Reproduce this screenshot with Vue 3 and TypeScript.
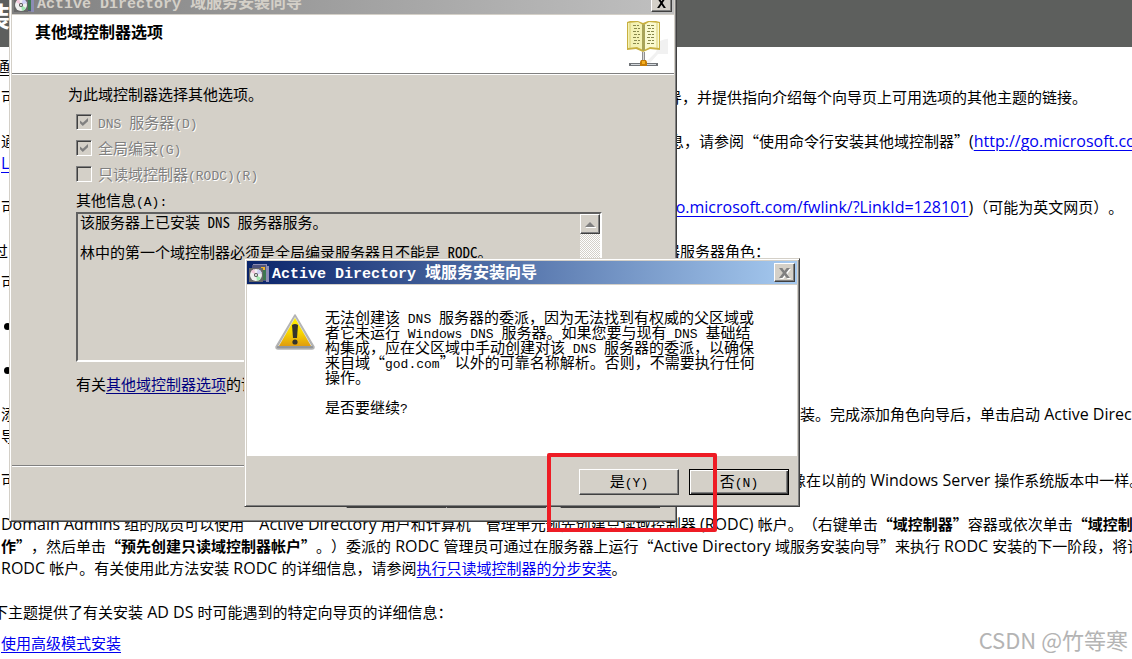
<script setup lang="ts">
interface Run {
  text: string
  latin: boolean
}
interface Segment {
  text: string
  bold?: boolean
  href?: string
}
interface Line {
  kind?: string
  lead?: Segment[]
  leadWidth?: number
  rest?: Segment[]
}

// Splits mixed text so that Latin and Chinese runs can each have their own face.
function runs(text: string): Run[] {
  const parts = text.match(/[\x00-\x7f]+|[^\x00-\x7f]+/g) ?? []
  return parts.map((part) => ({ text: part, latin: part.charCodeAt(0) < 128 }))
}

const appTitle = 'Active Directory 域服务安装向导'

const lines: Line[] = [
  { kind: 'outdent-small', lead: [{ text: '通' }] },
  {
    kind: 'near',
    lead: [{ text: '可' }],
    leadWidth: 666,
    rest: [{ text: '导，并提供指向介绍每个向导页上可用选项的其他主题的链接。' }],
  },
  {
    kind: 'para',
    lead: [{ text: '通' }],
    leadWidth: 668,
    rest: [
      { text: '息，请参阅“使用命令行安装其他域控制器”(' },
      { text: 'http://go.microsoft.com/fwlink/?', href: '#commandline' },
    ],
  },
  { lead: [{ text: 'L', href: '#commandline' }] },
  {
    kind: 'para',
    lead: [{ text: '可' }],
    leadWidth: 666,
    rest: [
      { text: 'go.microsoft.com/fwlink/?LinkId=128101', href: '#fwlink' },
      { text: ')（可能为英文网页）。' },
    ],
  },
  {
    kind: 'para outdent',
    lead: [{ text: '过' }],
    leadWidth: 672,
    rest: [{ text: '器服务器角色：' }],
  },
  { kind: 'near', lead: [{ text: '可' }] },
  { kind: 'para bullet' },
  { kind: 'para bullet' },
  {
    kind: 'para',
    lead: [{ text: '添' }],
    leadWidth: 799,
    rest: [{ text: '装。完成添加角色向导后，单击启动 Active Directory' }],
  },
  { lead: [{ text: '导' }] },
  {
    kind: 'para',
    lead: [{ text: '可' }],
    leadWidth: 790,
    rest: [{ text: '像在以前的 Windows Server 操作系统版本中一样。' }],
  },
  {
    kind: 'para',
    rest: [
      { text: 'Domain Admins 组的成员可以使用“Active Directory 用户和计算机”管理单元预先创建只读域控制器 (RODC) 帐户。（右键单击' },
      { text: '“域控制器”', bold: true },
      { text: '容器或依次单击' },
      { text: '“域控制器”', bold: true },
    ],
  },
  {
    rest: [
      { text: '作”', bold: true },
      { text: '，然后单击' },
      { text: '“预先创建只读域控制器帐户”', bold: true },
      { text: '。）委派的 RODC 管理员可通过在服务器上运行“Active Directory 域服务安装向导”来执行 RODC 安装的下一阶段，将该' },
    ],
  },
  {
    rest: [
      { text: 'RODC 帐户。有关使用此方法安装 RODC 的详细信息，请参阅' },
      { text: '执行只读域控制器的分步安装', href: '#rodc-steps' },
      { text: '。' },
    ],
  },
  {
    kind: 'para outdent',
    rest: [{ text: '下主题提供了有关安装 AD DS 时可能遇到的特定向导页的详细信息：' }],
  },
  { kind: 'near', rest: [{ text: '使用高级模式安装', href: '#advanced' }] },
]

const options = [
  { id: 'dns', label: 'DNS 服务器(D)', checked: true },
  { id: 'gc', label: '全局编录(G)', checked: true },
  { id: 'rodc', label: '只读域控制器(RODC)(R)', checked: false },
]

const info = '该服务器上已安装 DNS 服务器服务。\n\n林中的第一个域控制器必须是全局编录服务器且不能是 RODC。'

const message = [
  '无法创建该 DNS 服务器的委派，因为无法找到有权威的父区域或',
  '者它未运行 Windows DNS 服务器。如果您要与现有 DNS 基础结',
  '构集成，应在父区域中手动创建对该 DNS 服务器的委派，以确保',
  '来自域“god.com”以外的可靠名称解析。否则，不需要执行任何',
  '操作。',
  '',
  '是否要继续?',
]
</script>

<template>
  <main class="desk">
    <article class="doc">
      <header class="doc-head"><h1>装</h1></header>
      <div class="doc-body">
        <p v-for="(line, i) in lines" :key="i" class="line" :class="line.kind">
          <span v-if="line.lead" class="lead" :style="{ width: line.leadWidth ? line.leadWidth + 'px' : 'auto' }">
            <component
              :is="seg.href ? 'a' : 'span'"
              v-for="(seg, j) in line.lead"
              :key="j"
              :href="seg.href"
            ><span v-for="(run, k) in runs(seg.text)" :key="k" :class="{ latin: run.latin }">{{ run.text }}</span></component>
          </span>
          <span v-if="line.rest">
            <component
              :is="seg.href ? 'a' : seg.bold ? 'strong' : 'span'"
              v-for="(seg, j) in line.rest"
              :key="j"
              :href="seg.href"
            ><span v-for="(run, k) in runs(seg.text)" :key="k" :class="{ latin: run.latin }">{{ run.text }}</span></component>
          </span>
        </p>
      </div>
    </article>

    <section class="window wizard">
      <div class="titlebar inactive">
        <svg class="app-icon" viewBox="0 0 20 20" aria-hidden="true">
          <path d="M4 1h14v2h2v16h-3V4H4z" fill="#8c8cb4" />
          <path d="M3 2h14v16h-3V5H3z" fill="#50547c" />
          <path d="M12 4h4v12h-3z" fill="#f0b428" />
          <path d="M14 7h3v10h-3z" fill="#3c7850" />
          <path d="M0 5h14v14H0z" fill="#686868" />
          <circle cx="7" cy="12" r="6" fill="#f0f0f0" />
          <path d="M7 12L2 9a6 6 0 0 1 3-3z" fill="#f4c8dc" />
          <path d="M7 12l5 3a6 6 0 0 1-4 3z" fill="#a0e8b0" />
          <path d="M7 12l2-6a6 6 0 0 1 4 4z" fill="#d0d0f4" />
          <circle cx="7" cy="12" r="2" fill="#505050" />
          <circle cx="7" cy="12" r="1" fill="#fff" />
        </svg>
        <h2 class="title"><span v-for="(run, k) in runs(appTitle)" :key="k" :class="{ latin: run.latin }">{{ run.text }}</span></h2>
        <button class="close" type="button" aria-label="关闭">
          <svg viewBox="0 0 10 9" aria-hidden="true"><path d="M1 0h2l2 3 2-3h2L6 4.500l3 4.500H7L5 6 3 9H1l3-4.500z" fill="currentColor" /></svg>
        </button>
      </div>
      <header class="page-head">
        <h3>其他域控制器选项</h3>
        <svg class="book" viewBox="0 0 44 50" aria-hidden="true">
          <path d="M34 21q8-3 8-2v15H32l-8 9h-5l11-11z" fill="#f1f1f1" />
          <path d="M1 2l3-1 8 0 5 2 5-2 8 0 4 1v28l-10-1-7 3-7-3-9 1z" fill="#c8b040" />
          <path d="M2 3l10-1 5 3v25l-6-3-9 1z" fill="#f4f2b4" />
          <path d="M33 3L23 2l-5 3v25l6-3 9 1z" fill="#fafad0" />
          <path d="M16 4l1.500 1L19 4v26l-1.500 1L16 30z" fill="#a8a458" />
          <path d="M4 3v25M31 3v25" stroke="#d8cc70" fill="none" />
          <path d="M7 5.500h6M8 8.500h6M7 11.500h6M8 14.500h6M7 17.500h6M8 20.500h6M7 23.500h6M21 5.500h7M22 8.500h6M21 11.500h7M22 14.500h6M21 17.500h7M22 20.500h6M21 23.500h7" stroke="#88884c" stroke-dasharray="3 1" fill="none" />
          <path d="M16 32h3v9h-3z" fill="#909090" />
          <path d="M17 32h1v9h-1z" fill="#d8d8d8" />
          <path d="M3 43h29v3H3z" fill="#707478" />
          <path d="M5 44h25v1H5z" fill="#d4d8dc" />
          <path d="M15 40h5l1 2v4h-7v-4z" fill="#c47c08" />
          <path d="M16 41h3v3h-3z" fill="#f4b020" />
        </svg>
      </header>
      <div class="page">
        <p class="text"><span>为此域控制器选择其他选项。</span></p>
        <div class="fields">
          <div v-for="o in options" :key="o.id" class="option">
            <input :id="o.id" type="checkbox" :checked="o.checked" disabled />
            <label :for="o.id"><span v-for="(run, k) in runs(o.label)" :key="k" :class="{ latin: run.latin }">{{ run.text }}</span></label>
          </div>
          <label class="text info-label" for="info"><span v-for="(run, k) in runs('其他信息(A):')" :key="k" :class="{ latin: run.latin }">{{ run.text }}</span></label>
          <div class="info-box">
            <textarea id="info" readonly :value="info"></textarea>
            <div class="scroll">
              <button type="button" aria-label="向上滚动" disabled>
                <svg viewBox="0 0 11 7" aria-hidden="true"><path d="M1 6h10v1H1z" fill="#fff" /><path d="M0 6l5-5 5 5z" fill="#808080" /></svg>
              </button>
            </div>
          </div>
          <p class="text more"><span>有关</span><a href="#options">其他域控制器选项</a><span>的详细信息</span></p>
        </div>
      </div>
      <footer class="wizard-foot">
        <div class="pair">
          <button class="btn" type="button" aria-label="上一步"></button>
          <button class="btn" type="button" aria-label="下一步"></button>
        </div>
        <button class="btn" type="button" aria-label="取消"></button>
      </footer>
    </section>

    <section class="window alert" role="alertdialog" aria-labelledby="alert-title">
      <div class="titlebar">
        <svg class="app-icon" viewBox="0 0 20 20" aria-hidden="true">
          <path d="M4 1h14v2h2v16h-3V4H4z" fill="#8c8cb4" />
          <path d="M3 2h14v16h-3V5H3z" fill="#50547c" />
          <path d="M12 4h4v12h-3z" fill="#f0b428" />
          <path d="M14 7h3v10h-3z" fill="#3c7850" />
          <path d="M0 5h14v14H0z" fill="#686868" />
          <circle cx="7" cy="12" r="6" fill="#f0f0f0" />
          <path d="M7 12L2 9a6 6 0 0 1 3-3z" fill="#f4c8dc" />
          <path d="M7 12l5 3a6 6 0 0 1-4 3z" fill="#a0e8b0" />
          <path d="M7 12l2-6a6 6 0 0 1 4 4z" fill="#d0d0f4" />
          <circle cx="7" cy="12" r="2" fill="#505050" />
          <circle cx="7" cy="12" r="1" fill="#fff" />
        </svg>
        <h2 id="alert-title" class="title"><span v-for="(run, k) in runs(appTitle)" :key="k" :class="{ latin: run.latin }">{{ run.text }}</span></h2>
        <button class="close" type="button" aria-label="关闭" disabled>
          <svg viewBox="0 0 10 9" aria-hidden="true"><path d="M0 0h3l2 2.500L7 0h3L6.500 4.500 10 9H7L5 6.500 3 9H0l3.500-4.500z" fill="currentColor" /></svg>
        </button>
      </div>
      <div class="alert-body">
        <svg class="warn" viewBox="0 0 42 38" aria-hidden="true">
          <defs>
            <linearGradient id="warn-fill" x1="0" y1="0" x2="0" y2="1">
              <stop offset="0" stop-color="#fff000" />
              <stop offset="0.5" stop-color="#f8d800" />
              <stop offset="1" stop-color="#e09c10" />
            </linearGradient>
            <linearGradient id="warn-edge" x1="0" y1="0" x2="0" y2="1">
              <stop offset="0" stop-color="#c8c8c8" />
              <stop offset="1" stop-color="#909498" />
            </linearGradient>
          </defs>
          <path d="M21 2L40 34q0 2-2 2H4q-2 0-2-2z" fill="url(#warn-edge)" stroke="#b4b4b4" stroke-width="1.500" stroke-linejoin="round" />
          <path d="M21 4L38 33H4z" fill="#e0e0e0" />
          <path d="M21 5L37 33H5z" fill="url(#warn-fill)" />
          <path d="M18 12q3-2 6 0l-1 13h-4z" fill="#34342c" />
          <circle cx="21" cy="29" r="2.600" fill="#34342c" />
        </svg>
        <div class="message">
          <p v-for="(row, i) in message" :key="i"><span v-for="(run, k) in runs(row)" :key="k" :class="{ latin: run.latin }">{{ run.text }}</span></p>
        </div>
      </div>
      <footer class="alert-foot">
        <button class="btn" type="button"><span>是</span><span class="latin">(Y)</span></button>
        <button class="btn default" type="button"><span>否</span><span class="latin">(N)</span></button>
      </footer>
    </section>

    <div class="marker" aria-hidden="true"></div>
    <div class="watermark">CSDN @竹等寒</div>
  </main>
</template>

<style>
body {
  margin: 0;
  background: #fff;
  overflow: hidden;
}
</style>

<style scoped>
.desk {
  position: relative;
  min-height: 100vh;
  overflow: hidden;
  background: #fff;
  color: #000;
  font: 15px/22px "Noto Sans CJK SC", sans-serif;
  text-spacing-trim: space-all;
}
h1,
h2,
h3,
p {
  margin: 0;
  font: inherit;
}

/* help page behind the windows */
.doc-head {
  height: 47px;
  margin-bottom: 8px;
  background: #5d5f5d;
  color: #fff;
}
.doc-head h1 {
  margin-left: -17px;
  font-size: 27px;
  font-weight: 700;
  line-height: 32px;
}
.doc-body {
  padding-left: 1px;
}
.line {
  display: flex;
  height: 22px;
  white-space: pre;
}
.line .latin {
  font-family: "Open Sans", sans-serif;
  font-size: 16px;
  line-height: 1;
}
.line.near {
  margin-top: 9px;
}
.line.para {
  margin-top: 22px;
}
.line.outdent {
  margin-left: -8px;
}
.line.outdent-small {
  margin-left: -6px;
  text-decoration: underline;
  text-underline-offset: 3px;
}
.line.bullet::before {
  content: "";
  width: 7px;
  height: 7px;
  margin: 8px 0 0 3px;
  border-radius: 50%;
  background: #000;
}
.lead {
  flex: none;
}
.line a {
  color: #0000f0;
  text-decoration: underline;
  text-underline-offset: 3px;
}
.line strong {
  font-weight: 700;
}

/* classic window frame */
.window {
  position: absolute;
  display: flex;
  flex-direction: column;
  box-sizing: border-box;
  padding: 1px 2px 2px;
  border: 1px solid;
  border-color: #d4d0c8 #404040 #404040 #d4d0c8;
  background: #d4d0c8;
  box-shadow: inset 1px 1px #fff, inset -1px -1px #808080;
}
.window::before {
  content: "";
  height: 1px;
}
.wizard {
  left: 9px;
  top: -12px;
  width: 668px;
  min-height: 534px;
}
.alert {
  left: 244px;
  top: 258px;
  width: 556px;
}
.titlebar {
  display: flex;
  align-items: center;
  height: 23px;
  padding: 0 2px;
  background: linear-gradient(90deg, #0a246a, #a6caf0);
  color: #fff;
}
.titlebar.inactive {
  background: linear-gradient(90deg, #808080, #c0c0c0);
  color: #d4d0c8;
}
.app-icon {
  width: 20px;
  height: 20px;
}
.title {
  flex: 1;
  margin-left: 3px;
  font-size: 16px;
  font-weight: 700;
  white-space: pre;
}
.title .latin {
  font-family: "Liberation Mono", monospace;
  font-size: 15px;
}
.close {
  display: flex;
  align-items: center;
  justify-content: center;
  width: 21px;
  height: 19px;
  padding: 0;
  border: 1px solid;
  border-color: #fff #404040 #404040 #fff;
  background: #d4d0c8;
  box-shadow: inset -1px -1px #808080;
  color: #000;
}
.close:disabled {
  color: #808080;
}
.close:disabled svg {
  filter: drop-shadow(1px 1px 0 #fff);
}
.close svg {
  width: 11px;
  height: 10px;
}

/* wizard page */
.page-head {
  display: flex;
  justify-content: space-between;
  height: 58px;
  margin-top: 1px;
  padding: 0 4px 0 23px;
  border-bottom: 1px solid #808080;
  background: #fff;
  box-shadow: 0 1px #fff;
}
.page-head h3 {
  margin-top: 5px;
  font-size: 16px;
  font-weight: 700;
}
.book {
  width: 44px;
  height: 50px;
  margin-top: 5px;
}
.page {
  flex: 1;
  padding: 10px 72px 0 56px;
}
.text {
  display: block;
  line-height: 20px;
  white-space: pre;
}
.text .latin,
.option .latin,
.message .latin,
.btn .latin {
  font-family: "Liberation Mono", monospace;
  font-size: 13px;
  line-height: 1;
}
.fields {
  margin: 5px 0 0 8px;
}
.option {
  display: flex;
  align-items: center;
  gap: 6px;
  height: 26px;
  color: #808080;
  text-shadow: 1px 1px #fff;
  white-space: pre;
}
.option input {
  appearance: none;
  width: 16px;
  height: 16px;
  margin: 0;
  padding: 3px;
  border: 1px solid;
  border-color: #808080 #fff #fff #808080;
  box-shadow: inset 1px 1px #404040;
}
.option input:checked::after {
  content: "";
  display: block;
  width: 8px;
  height: 8px;
  background: #808080;
  clip-path: polygon(0 30%, 0 65%, 35% 100%, 100% 40%, 100% 0, 35% 60%);
}
.info-label {
  margin-top: 3px;
}
.info-box {
  display: flex;
  height: 146px;
  margin-top: 2px;
  border: 2px solid;
  border-color: #606060 #fff #fff #606060;
}
.info-box textarea {
  flex: 1;
  padding: 0 2px;
  border: 0;
  outline: 0;
  background: transparent;
  color: #000;
  font: 15px/15px "Noto Sans Mono CJK SC", "Noto Sans CJK SC", monospace;
  resize: none;
  overflow: hidden;
}
.scroll {
  width: 20px;
  background: repeating-conic-gradient(#fff 0 25%, #d4d0c8 0 50%) 0 0 / 2px 2px;
}
.scroll button {
  display: flex;
  align-items: center;
  justify-content: center;
  width: 20px;
  height: 20px;
  padding: 0;
  border: 1px solid;
  border-color: #fff #404040 #404040 #fff;
  background: #d4d0c8;
  box-shadow: inset -1px -1px #808080;
}
.scroll svg {
  width: 11px;
  height: 7px;
}
.more {
  margin-top: 12px;
}
.more a {
  color: #000080;
  text-underline-offset: 3px;
}
.wizard-foot {
  display: flex;
  justify-content: flex-end;
  gap: 14px;
  height: 37px;
  padding: 16px 14px 0 0;
  border-top: 1px solid #808080;
  box-shadow: inset 0 1px #fff;
}
.pair {
  display: flex;
}
.btn {
  width: 100px;
  height: 26px;
  padding: 0 0 2px;
  border: 1px solid;
  border-color: #fff #404040 #404040 #fff;
  background: #d4d0c8;
  box-shadow: inset -1px -1px #808080;
  color: #000;
  font: 15px/20px "Noto Sans CJK SC", sans-serif;
}
.btn.default {
  border-color: #000;
  box-shadow: inset 1px 1px #fff, inset -1px -1px #404040, inset -2px -2px #808080;
}

/* alert */
.alert-body {
  display: flex;
  align-items: flex-start;
  gap: 9px;
  min-height: 121px;
  margin-top: 1px;
  padding: 24px 40px 26px 27px;
  background: #fff;
}
.warn {
  flex: none;
  width: 42px;
  height: 38px;
  margin-top: 4px;
}
.message {
  line-height: 15px;
  white-space: pre;
}
.message p {
  height: 15px;
}
.alert-foot {
  display: flex;
  justify-content: flex-end;
  gap: 10px;
  padding: 13px 8px 9px;
}

/* highlight round the answer, and the page's watermark */
.marker {
  position: absolute;
  left: 547px;
  top: 453px;
  box-sizing: border-box;
  width: 170px;
  height: 79px;
  border: 4px solid #ee1c25;
  border-radius: 2px;
}
.watermark {
  position: absolute;
  right: 4px;
  bottom: 6px;
  color: #b4b4b4;
  font-size: 22px;
  line-height: 28px;
}
</style>
